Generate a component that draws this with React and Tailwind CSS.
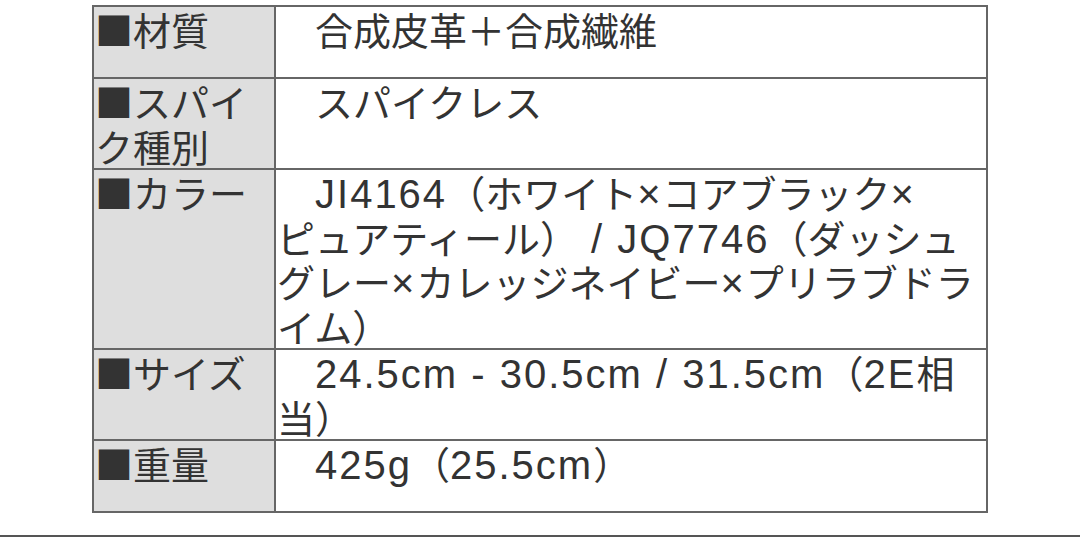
const cjk = { fontFamily: '"Noto Sans CJK JP", sans-serif' };

// Latin runs are set a little larger and tracked out, like the phone font in the picture
function Mixed({ text }) {
  const parts = text.split(/([A-Za-z0-9.\-/ ×]+)/).filter(Boolean);
  return parts.map((p, i) =>
    /^[A-Za-z0-9.\-/ ×]+$/.test(p) ? (
      <span key={i} className="text-[40px] tracking-[2px]" style={{ fontFamily: '"Liberation Sans", sans-serif' }}>
        {p}
      </span>
    ) : (
      <span key={i} style={cjk}>
        {p}
      </span>
    )
  );
}

const rows = [
  { label: ['■材質'], lines: ['　合成皮革＋合成繊維'], single: true },
  { label: ['■スパイ', 'ク種別'], lines: ['　スパイクレス'] },
  {
    label: ['■カラー'],
    lines: [
      '　JI4164（ホワイト×コアブラック×',
      'ピュアティール） / JQ7746（ダッシュ',
      'グレー×カレッジネイビー×プリラブドラ',
      'イム）',
    ],
  },
  { label: ['■サイズ'], lines: ['　24.5cm - 30.5cm / 31.5cm（2E相', '当）'] },
  { label: ['■重量'], lines: ['　425g（25.5cm）'], single: true },
];

function Lines({ lines, single }) {
  return (
    <div className={single ? 'min-h-[70px]' : ''}>
      {lines.map((l, j) => (
        <div key={j} className="h-[44.5px] leading-[44.5px] whitespace-nowrap">
          <Mixed text={l} />
        </div>
      ))}
    </div>
  );
}

export default function App() {
  return (
    <div className="w-[1080px] h-[537px] bg-white relative overflow-hidden text-[#333] text-[38px]" style={cjk}>
      <div className="pt-[5px] pl-[92px]">
        <table className="w-[896px] border-collapse border-2 border-[#666] table-fixed">
          <colgroup>
            <col className="w-[182px]" />
            <col />
          </colgroup>
          <tbody>
            {rows.map((r, i) => (
              <tr key={i}>
                <td className="align-top bg-[#dedede] border-2 border-[#666] p-0 pl-[1px]">
                  <Lines lines={r.label} single={r.single} />
                </td>
                <td className="align-top border-2 border-[#666] p-0 pl-[1px]">
                  <Lines lines={r.lines} single={r.single} />
                </td>
              </tr>
            ))}
          </tbody>
        </table>
      </div>
      <div className="absolute left-0 right-0 bottom-0 h-[2px] bg-[#555]" />
    </div>
  );
}
